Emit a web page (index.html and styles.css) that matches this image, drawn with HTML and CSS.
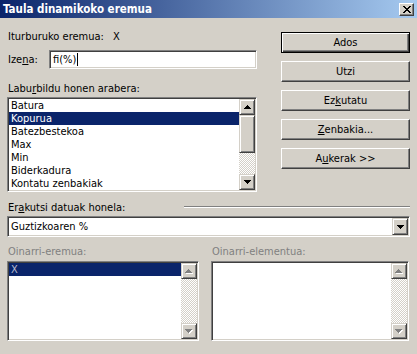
FILE: index.html
```html
<!DOCTYPE html>
<html>
<head>
<meta charset="utf-8">
<title>Taula dinamikoko eremua</title>
<link rel="stylesheet" href="styles.css">
</head>
<body>
<div class="dialog">
  <div class="titlebar">
    <span class="title">Taula dinamikoko eremua</span>
    <div class="close">
      <svg width="8" height="7" viewBox="0 0 8 7"><path d="M0 0h2v1H0zM6 0h2v1H6zM1 1h2v1H1zM5 1h2v1H5zM2 2h4v1H2zM3 3h2v1H3zM2 4h4v1H2zM1 5h2v1H1zM5 5h2v1H5zM0 6h2v1H0zM6 6h2v1H6z"/></svg>
    </div>
  </div>
  <div class="content">
    <div class="top">
      <div class="left">
        <div class="src"><span class="src-label">Iturburuko eremua:</span><span>X</span></div>
        <div class="name">
          <span class="name-label">Ize<u>n</u>a:</span>
          <div class="field"><span>fi(%)</span><span class="caret"></span></div>
        </div>
        <div class="caption">Labu<u>r</u>bildu honen arabera:</div>
        <div class="listbox summary">
          <ul class="items">
            <li>Batura</li>
            <li class="sel">Kopurua</li>
            <li>Batezbestekoa</li>
            <li>Max</li>
            <li>Min</li>
            <li>Biderkadura</li>
            <li>Kontatu zenbakiak</li>
          </ul>
          <div class="vscroll">
            <div class="sb-btn"><svg width="7" height="4" viewBox="0 0 7 4"><path d="M3 0h1v1H3zM2 1h3v1H2zM1 2h5v1H1zM0 3h7v1H0z"/></svg></div>
            <div class="thumb"></div>
            <div class="track"></div>
            <div class="sb-btn"><svg width="7" height="4" viewBox="0 0 7 4"><path d="M0 0h7v1H0zM1 1h5v1H1zM2 2h3v1H2zM3 3h1v1H3z"/></svg></div>
          </div>
        </div>
      </div>
      <div class="buttons">
        <div class="btn default">Ados</div>
        <div class="btn">Utzi</div>
        <div class="btn">Ez<u>k</u>utatu</div>
        <div class="btn"><u>Z</u>enbakia...</div>
        <div class="btn">A<u>u</u>kerak &gt;&gt;</div>
      </div>
    </div>

    <div class="show-row">
      <span class="show-label">Er<u>a</u>kutsi datuak honela:</span>
      <span class="etched"></span>
    </div>
    <div class="combo">
      <span class="combo-text">Guztizkoaren %</span>
      <div class="combo-btn"><svg width="7" height="4" viewBox="0 0 7 4"><path d="M0 0h7v1H0zM1 1h5v1H1zM2 2h3v1H2zM3 3h1v1H3z"/></svg></div>
    </div>

    <div class="base">
      <div class="base-caption">Oinarri-eremua:</div>
      <div class="base-caption">Oinarri-elementua:</div>
      <div class="listbox base-list">
        <ul class="items">
          <li class="sel-dis">X</li>
        </ul>
        <div class="vscroll">
          <div class="sb-btn"><svg width="8" height="5" viewBox="0 0 8 5"><path fill="#fff" d="M4 1h1v1H4zM3 2h3v1H3zM2 3h5v1H2zM1 4h7v1H1z"/><path fill="#808080" d="M3 0h1v1H3zM2 1h3v1H2zM1 2h5v1H1zM0 3h7v1H0z"/></svg></div>
          <div class="track"></div>
          <div class="sb-btn"><svg width="8" height="5" viewBox="0 0 8 5"><path fill="#fff" d="M1 1h7v1H1zM2 2h5v1H2zM3 3h3v1H3zM4 4h1v1H4z"/><path fill="#808080" d="M0 0h7v1H0zM1 1h5v1H1zM2 2h3v1H2zM3 3h1v1H3z"/></svg></div>
        </div>
      </div>
      <div class="listbox base-list">
        <ul class="items"></ul>
        <div class="vscroll">
          <div class="sb-btn"><svg width="8" height="5" viewBox="0 0 8 5"><path fill="#fff" d="M4 1h1v1H4zM3 2h3v1H3zM2 3h5v1H2zM1 4h7v1H1z"/><path fill="#808080" d="M3 0h1v1H3zM2 1h3v1H2zM1 2h5v1H1zM0 3h7v1H0z"/></svg></div>
          <div class="track"></div>
          <div class="sb-btn"><svg width="8" height="5" viewBox="0 0 8 5"><path fill="#fff" d="M1 1h7v1H1zM2 2h5v1H2zM3 3h3v1H3zM4 4h1v1H4z"/><path fill="#808080" d="M0 0h7v1H0zM1 1h5v1H1zM2 2h3v1H2zM3 3h1v1H3z"/></svg></div>
        </div>
      </div>
    </div>
  </div>
</div>
</body>
</html>
```

FILE: styles.css
```css
* { box-sizing: border-box; }

body {
  margin: 0;
  background: #d4d0c8;
}

.dialog {
  width: 417px;
  height: 354px;
  overflow: hidden;
  background: #d4d0c8;
  color: #000;
  font-family: "DejaVu Sans Condensed", "Liberation Sans", sans-serif;
  font-size: 11px;
}

svg { display: block; shape-rendering: crispEdges; }

/* title bar */
.titlebar {
  height: 18px;
  display: flex;
  align-items: center;
  padding: 0 3px 0 3px;
  background: linear-gradient(to right, #0a246a, #a6caf0);
}

.title {
  color: #fff;
  font-weight: bold;
  font-size: 11.5px;
  white-space: nowrap;
}

.close {
  margin-left: auto;
  width: 15px;
  height: 13px;
  display: flex;
  align-items: center;
  justify-content: center;
  background: #d4d0c8;
  border: 1px solid;
  border-color: #fff #404040 #404040 #fff;
  box-shadow: inset -1px -1px #808080;
}

/* content */
.content {
  padding: 0 7px;
}

.top {
  display: flex;
}

.left {
  width: 250px;
}

.src {
  margin-top: 12px;
  height: 13px;
  line-height: 13px;
  padding-left: 1px;
  display: flex;
}

.src-label {
  width: 105px;
}

.name {
  margin-top: 7px;
  height: 19px;
  display: flex;
  align-items: center;
}

.name-label {
  width: 42px;
  padding-left: 1px;
}

.field {
  width: 208px;
  height: 19px;
  display: flex;
  align-items: center;
  padding: 1px 1px 1px 3px;
  background: #fff;
  border: 1px solid;
  border-color: #808080 #fff #fff #808080;
  box-shadow: inset 1px 1px #404040, inset -1px -1px #d4d0c8;
}

.caret {
  width: 1px;
  height: 13px;
  margin-left: 1px;
  background: #000;
}

.caption {
  margin-top: 13px;
  height: 13px;
  line-height: 13px;
  padding-left: 1px;
}

/* list boxes */
.listbox {
  display: flex;
  padding: 1px;
  background: #fff;
  border: 1px solid;
  border-color: #808080 #fff #fff #808080;
  box-shadow: inset 1px 1px #404040, inset -1px -1px #d4d0c8;
}

.summary {
  margin-top: 2px;
  width: 250px;
  height: 95px;
}

.items {
  list-style: none;
  margin: 0;
  padding: 0;
  flex: 1;
  min-width: 0;
}

.items li {
  height: 13px;
  line-height: 13px;
  padding-left: 2px;
  white-space: nowrap;
}

.items .sel {
  background: #0a246a;
  color: #fff;
}

.items .sel-dis {
  background: #0a246a;
  color: #b8bcd0;
}

.vscroll {
  width: 16px;
  flex: none;
  display: flex;
  flex-direction: column;
}

.sb-btn,
.thumb,
.combo-btn,
.btn {
  background: #d4d0c8;
  border: 1px solid;
  border-color: #d4d0c8 #404040 #404040 #d4d0c8;
  box-shadow: inset 1px 1px #fff, inset -1px -1px #808080;
}

.sb-btn {
  height: 16px;
  flex: none;
  display: flex;
  align-items: center;
  justify-content: center;
}

.thumb {
  height: 38px;
  flex: none;
}

.track {
  flex: 1;
  background: repeating-conic-gradient(#d4d0c8 0 25%, #fff 0 50%) 0 0 / 2px 2px;
}

/* buttons */
.buttons {
  margin-left: 24px;
  margin-top: 14px;
  width: 129px;
  display: flex;
  flex-direction: column;
  gap: 8px;
}

.btn {
  height: 21px;
  display: flex;
  align-items: center;
  justify-content: center;
  border-color: #fff #404040 #404040 #fff;
  box-shadow: inset -1px -1px #808080;
}

.btn.default {
  border-color: #000;
  box-shadow: inset 1px 1px #fff, inset -1px -1px #404040, inset -2px -2px #808080;
}

/* show data as */
.show-row {
  margin-top: 9px;
  height: 13px;
  line-height: 13px;
  display: flex;
  padding-left: 1px;
}

.show-label {
  width: 176px;
  flex: none;
}

.etched {
  flex: 1;
  align-self: flex-start;
  margin-top: 5px;
  height: 2px;
  border-top: 1px solid #808080;
  border-bottom: 1px solid #fff;
}

.combo {
  margin-top: 2px;
  height: 21px;
  display: flex;
  align-items: stretch;
  padding: 1px;
  background: #fff;
  border: 1px solid;
  border-color: #808080 #fff #fff #808080;
  box-shadow: inset 1px 1px #404040, inset -1px -1px #d4d0c8;
}

.combo-text {
  flex: 1;
  padding-left: 2px;
  display: flex;
  align-items: center;
}

.combo-btn {
  width: 16px;
  display: flex;
  align-items: center;
  justify-content: center;
}

/* base field / item */
.base {
  margin-top: 8px;
  display: grid;
  grid-template-columns: 192px 198px;
  column-gap: 12px;
}

.base-caption {
  height: 13px;
  line-height: 13px;
  padding-left: 1px;
  color: #808080;
}

.base-list {
  margin-top: 3px;
  height: 80px;
}
```
